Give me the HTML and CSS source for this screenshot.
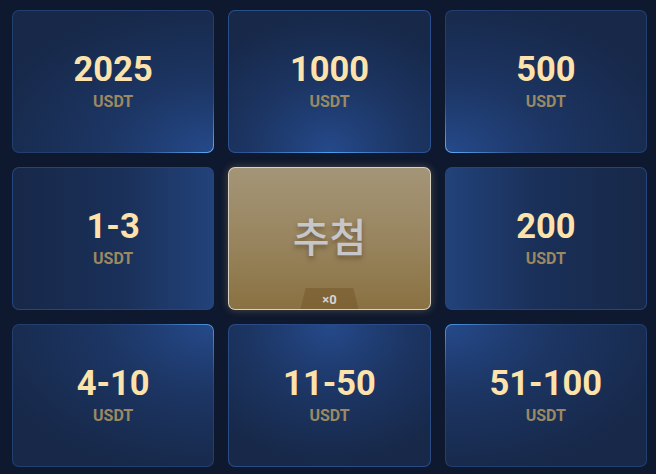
FILE: index.html
```html
<!DOCTYPE html>
<html lang="ko">
<head>
<meta charset="utf-8">
<link rel="stylesheet" href="styles.css">
</head>
<body>
<div class="grid">
  <div class="cell c1"><div class="num">2025</div><div class="unit">USDT</div></div>
  <div class="cell c2"><div class="num">1000</div><div class="unit">USDT</div></div>
  <div class="cell c3"><div class="num">500</div><div class="unit">USDT</div></div>
  <div class="cell c4"><div class="num">1-3</div><div class="unit">USDT</div></div>
  <div class="cell draw"><div class="draw-text">추첨</div><div class="tab">×0</div></div>
  <div class="cell c6"><div class="num">200</div><div class="unit">USDT</div></div>
  <div class="cell c7"><div class="num">4-10</div><div class="unit">USDT</div></div>
  <div class="cell c8"><div class="num">11-50</div><div class="unit">USDT</div></div>
  <div class="cell c9"><div class="num">51-100</div><div class="unit">USDT</div></div>
</div>
</body>
</html>
```
FILE: styles.css
```css
html, body {
  margin: 0;
  padding: 0;
  background: #0e182e;
  width: 656px;
  height: 474px;
  overflow: hidden;
  font-family: Roboto, "Liberation Sans", sans-serif;
}
.grid {
  display: grid;
  grid-template-columns: repeat(3, 1fr);
  grid-template-rows: repeat(3, 143px);
  gap: 14px;
  padding: 10px 9px 7px 12px;
}
.cell {
  position: relative;
  border-radius: 7px;
  border: 1px solid transparent;
  display: flex;
  flex-direction: column;
  align-items: center;
  justify-content: center;
  gap: 5px;
  box-sizing: border-box;
}
.num {
  font-weight: 700;
  font-size: 34.5px;
  line-height: 36px;
  color: #fde3ab;
}
.unit {
  font-weight: 700;
  font-size: 16px;
  line-height: 20px;
  color: #9c8962;
}
.c1 {
  background:
    radial-gradient(ellipse 120% 110% at 100% 100%, #25498a 0%, #1c3563 45%, #172848 100%) padding-box,
    radial-gradient(ellipse 60% 60% at 100% 100%, #5db0f8 0%, #2a4c86 60%, #22406f 100%) border-box;
}
.c2 {
  background:
    radial-gradient(ellipse 80% 100% at 50% 100%, #25498a 0%, #1c3563 50%, #172848 100%) padding-box,
    radial-gradient(ellipse 70% 50% at 50% 100%, #4a9ef0 0%, #2d5494 60%, #2a4e8c 100%) border-box;
}
.c3 {
  background:
    radial-gradient(ellipse 120% 110% at 0% 100%, #25498a 0%, #1c3563 45%, #172848 100%) padding-box,
    radial-gradient(ellipse 60% 60% at 0% 100%, #5db0f8 0%, #2a4c86 60%, #22406f 100%) border-box;
}
.c4 {
  background:
    linear-gradient(90deg, #172848 0%, #1a3059 55%, #22427a 100%) padding-box,
    linear-gradient(#25467c, #25467c) border-box;
}
.c6 {
  background:
    linear-gradient(270deg, #172848 0%, #1a3059 55%, #22427a 100%) padding-box,
    linear-gradient(#25467c, #25467c) border-box;
}
.c7 {
  background:
    radial-gradient(ellipse 120% 110% at 100% 0%, #25498a 0%, #1c3563 45%, #172848 100%) padding-box,
    radial-gradient(ellipse 60% 60% at 100% 0%, #4a98e4 0%, #2a4c86 60%, #22406f 100%) border-box;
}
.c8 {
  background:
    radial-gradient(ellipse 80% 100% at 50% 0%, #25498a 0%, #1c3563 50%, #172848 100%) padding-box,
    linear-gradient(#2a4c86, #2a4c86) border-box;
}
.c9 {
  background:
    radial-gradient(ellipse 120% 110% at 0% 0%, #25498a 0%, #1c3563 45%, #172848 100%) padding-box,
    radial-gradient(ellipse 60% 60% at 0% 0%, #4a98e4 0%, #2a4c86 60%, #22406f 100%) border-box;
}
.draw {
  background:
    linear-gradient(180deg, #a49578 0%, #9a8762 45%, #8a7142 100%) padding-box,
    linear-gradient(#d8d1c2, #d8d1c2) border-box;
  box-shadow: 0 0 8px rgba(190, 165, 115, 0.35);
  padding-bottom: 8px;
}
.draw-text {
  font-family: "Noto Sans CJK KR", "Noto Sans", sans-serif;
  font-size: 40px;
  line-height: 48px;
  font-weight: 500;
  color: #c6c6cb;
  text-shadow: 0 3px 5px rgba(60, 40, 10, 0.45);
}
.tab {
  position: absolute;
  left: 50%;
  bottom: 0;
  transform: translateX(-50%);
  width: 58px;
  height: 21px;
  clip-path: polygon(9% 0, 91% 0, 100% 100%, 0 100%);
  background: rgba(110, 82, 35, 0.45);
  color: #d4d4d6;
  font-size: 13px;
  font-weight: 700;
  line-height: 23px;
  text-align: center;
}
```
